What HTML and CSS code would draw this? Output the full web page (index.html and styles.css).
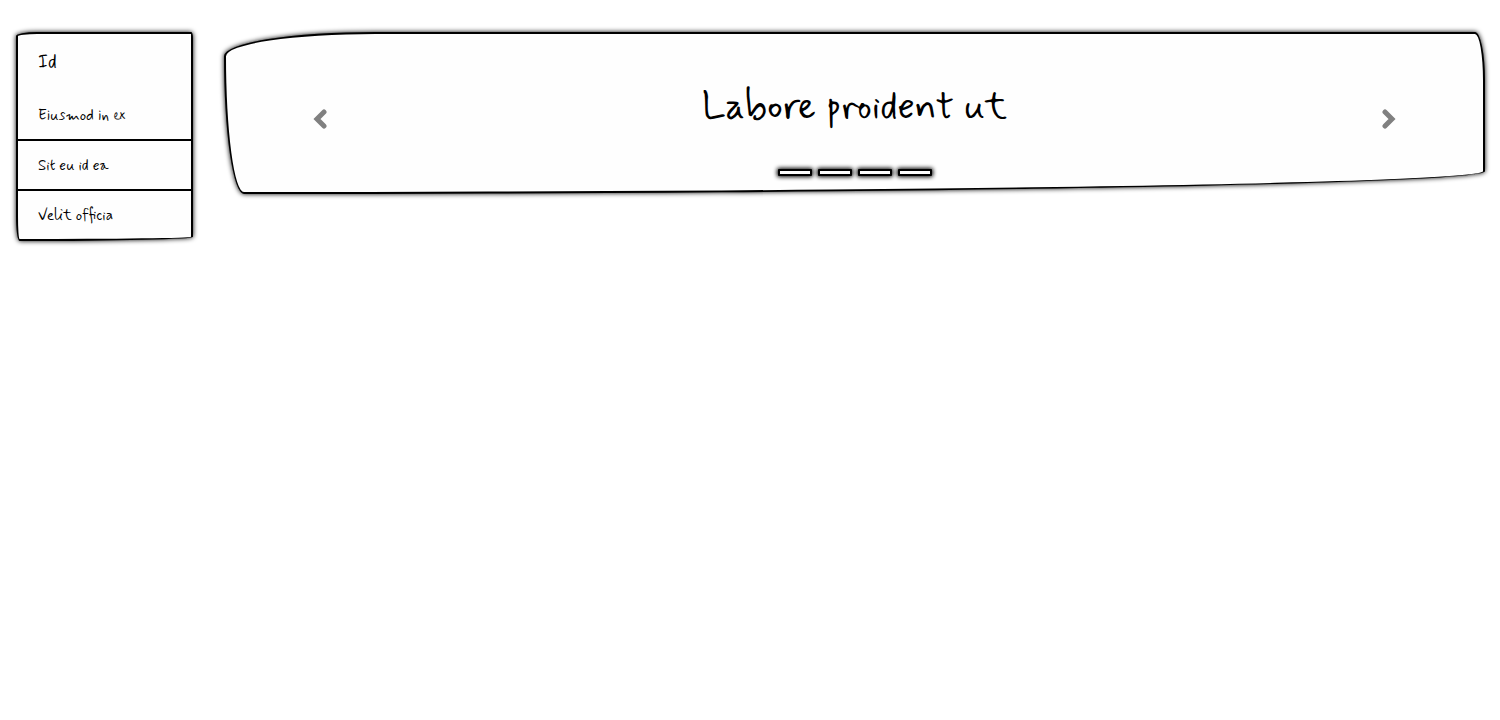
FILE: index.html
```html
<!DOCTYPE html>
<html lang="en">
<head>
<meta charset="utf-8">
<meta name="viewport" content="width=device-width, initial-scale=1">
<title>Labore proident ut</title>
<link rel="stylesheet" href="styles.css">
</head>
<body>
<div class="page">
  <nav class="menu sketch">
    <h2 class="menu-title">Id</h2>
    <ul class="menu-list">
      <li class="menu-item"><a class="menu-link" href="#one">Eiusmod in ex</a></li>
      <li class="menu-item"><a class="menu-link" href="#two">Sit eu id ea</a></li>
      <li class="menu-item"><a class="menu-link" href="#three">Velit officia</a></li>
    </ul>
  </nav>
  <main class="carousel sketch">
    <button class="arrow" type="button" aria-label="Previous">
      <svg width="14" height="20" viewBox="0 0 14 20"><path d="M11 3 4 10l7 7" /></svg>
    </button>
    <div class="slide">
      <h1 class="slide-title">Labore proident ut</h1>
      <div class="dots">
        <button class="dot" type="button" aria-label="Slide 1"></button>
        <button class="dot" type="button" aria-label="Slide 2"></button>
        <button class="dot" type="button" aria-label="Slide 3"></button>
        <button class="dot" type="button" aria-label="Slide 4"></button>
      </div>
    </div>
    <button class="arrow" type="button" aria-label="Next">
      <svg width="14" height="20" viewBox="0 0 14 20"><path d="M3 3l7 7-7 7" /></svg>
    </button>
  </main>
</div>
</body>
</html>
```
FILE: styles.css
```css
* { box-sizing: border-box; }
body {
  margin: 0;
  background: #fff;
  color: #000;
  font-family: Mynerve, "Liberation Sans", sans-serif;
}
.page {
  display: flex;
  align-items: flex-start;
  gap: 31px;
  padding: 32px 15px 32px 16px;
}
.sketch {
  border: 2px solid #000;
  background: #fefefe;
  box-shadow: 0 0 5px #000;
}
.menu {
  flex: 0 0 177px;
  border-radius: 12% 1% 96% 2% / 2% 3% 2% 12%;
}
.menu-title {
  margin: 0;
  padding: 17px 20px 15px;
  font-size: 19px;
  font-weight: 400;
  line-height: 24px;
}
.menu-list {
  margin: 0;
  padding: 0;
  list-style: none;
}
.menu-item + .menu-item { border-top: 2px solid #000; }
.menu-link {
  display: block;
  padding: 15px 20px 13px;
  color: inherit;
  font-size: 15px;
  line-height: 20px;
  text-decoration: none;
}
.menu-item:first-child .menu-link { padding-top: 16px; }
.carousel {
  flex: 1;
  display: flex;
  border-radius: 12% 10px 98% 20px / 15% 30% 14% 85%;
}
.arrow {
  flex: 0 0 15%;
  display: flex;
  align-items: center;
  justify-content: center;
  padding: 12px 0 0;
  border: 0;
  background: none;
}
.arrow path {
  fill: none;
  stroke: #808080;
  stroke-width: 5;
  stroke-linecap: round;
}
.slide {
  flex: 1;
  padding: 50px 0 16px;
  text-align: center;
}
.slide-title {
  margin: 0;
  font-size: 38px;
  font-weight: 400;
  line-height: 48px;
}
.dots {
  display: flex;
  justify-content: center;
  gap: 6px;
  padding-top: 37px;
}
.dot {
  width: 34px;
  height: 7px;
  padding: 0;
  border: 2px solid #000;
  border-radius: 1px;
  background: #fefefe;
  box-shadow: 0 0 4px 1px #000;
}
```
